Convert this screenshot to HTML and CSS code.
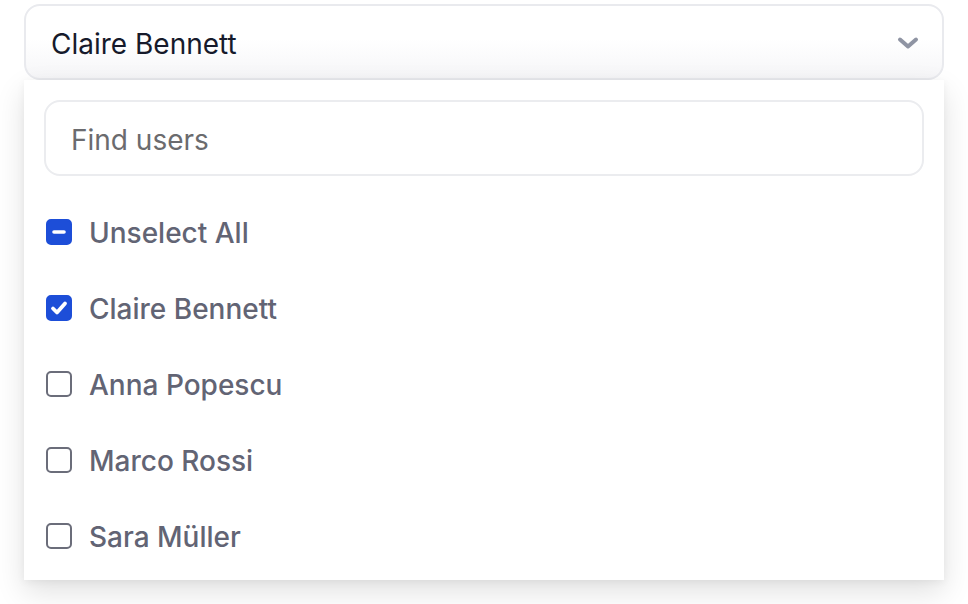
FILE: index.html
```html
<!DOCTYPE html>
<html>
<head>
<meta charset="utf-8">
<link rel="stylesheet" href="styles.css">
</head>
<body>
<div class="wrap">
  <div class="trigger">
    <span class="value">Claire Bennett</span>
    <svg class="chev" width="24" height="16" viewBox="0 0 24 16"><path d="M4 3.5l8 7 8-7" fill="none" stroke="#8f94a3" stroke-width="4" stroke-linecap="round" stroke-linejoin="round"/></svg>
  </div>
  <div class="panel">
    <div class="search">Find users</div>
    <ul class="list">
      <li class="item"><span class="box on"><svg width="26" height="26" viewBox="0 0 26 26"><path d="M8 13h10" stroke="#fff" stroke-width="3.6" stroke-linecap="round"/></svg></span>Unselect All</li>
      <li class="item"><span class="box on"><svg width="26" height="26" viewBox="0 0 26 26"><path d="M7 13.5l4 4 8-9" fill="none" stroke="#fff" stroke-width="3.8" stroke-linecap="round" stroke-linejoin="round"/></svg></span>Claire Bennett</li>
      <li class="item"><span class="box"></span>Anna Popescu</li>
      <li class="item"><span class="box"></span>Marco Rossi</li>
      <li class="item"><span class="box"></span>Sara Müller</li>
    </ul>
  </div>
</div>
</body>
</html>
```
FILE: styles.css
```css
* { box-sizing: border-box; }
html, body { margin: 0; padding: 0; background: #fff; height: 604px; overflow: hidden; }
body { font-family: Inter, "Noto Sans", sans-serif; }
.wrap { padding: 4px 24px 0 24px; width: 968px; }
.trigger {
  height: 76px;
  border: 2px solid #e9eaee;
  border-radius: 16px;
  background: linear-gradient(#fff 45%, #f6f6f8);
  display: flex;
  align-items: center;
  justify-content: space-between;
  padding: 3px 22px 0 25px;
}
.value { font-size: 28px; color: #161a2b; }
.chev { margin-top: 0; }
.panel {
  background: #fff;
  box-shadow: 0 12px 28px rgba(0,0,0,0.12), 0 2px 8px rgba(0,0,0,0.05);
  padding: 20px 20px 6px 20px;
  height: 500px;
}
.search {
  height: 76px;
  border: 2px solid #ebecef;
  border-radius: 16px;
  display: flex;
  align-items: center;
  padding: 4px 0 0 25px;
  font-size: 28px;
  color: #6b6b6e;
}
.list { list-style: none; margin: 18px 0 0 0; padding: 0; }
.item {
  height: 76px;
  display: flex;
  align-items: center;
  font-size: 28px;
  color: #626474;
  font-weight: 500;
}
.item .box { margin-top: -1px; }
.item { padding-top: 1px; }
.box {
  width: 26px; height: 26px;
  border: 2px solid #6b6d7a;
  border-radius: 5px;
  margin: 0 17px 0 2px;
  display: flex;
  flex: none;
}
.box.on { background: #1d4ed8; border-color: #1d4ed8; }
.box.on svg { margin: -2px; }
```
